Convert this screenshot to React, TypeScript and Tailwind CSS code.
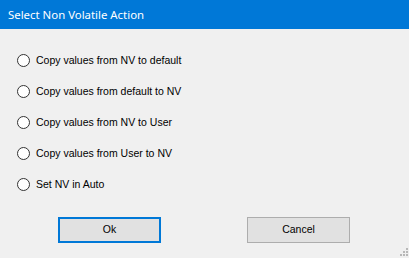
import React from "react";

const options = [
  "Copy values from NV to default",
  "Copy values from default to NV",
  "Copy values from NV to User",
  "Copy values from User to NV",
  "Set NV in Auto",
];

function Grip() {
  const dots = [
    [6, 0],
    [3, 3],
    [6, 3],
    [0, 6],
    [3, 6],
    [6, 6],
  ];
  return (
    <div className="absolute right-[1px] bottom-[2px] w-[8px] h-[8px]">
      {dots.map(([x, y], i) => (
        <span
          key={i}
          className="absolute w-[2px] h-[2px] bg-[#b8b8b8]"
          style={{ left: x, top: y }}
        />
      ))}
    </div>
  );
}

export default function App() {
  return (
    <div className="w-[409px] h-[258px] bg-[#f0f0f0] relative flex flex-col overflow-hidden">
      <div
        className="h-[29px] bg-[#0078d7] text-white text-[11.4px] flex items-center pl-[8px]"
        style={{ fontFamily: '"Noto Sans", "Segoe UI", sans-serif' }}
      >
        Select Non Volatile Action
      </div>
      <div
        className="flex flex-col gap-[18px] pl-[17px] pt-[25px]"
        style={{ fontFamily: '"Liberation Sans", Arial, sans-serif' }}
      >
        {options.map((o) => (
          <div key={o} className="flex items-center h-[13px] gap-[6px] text-[10.5px] text-black">
            <span className="w-[13px] h-[13px] rounded-full border border-[#333333] bg-white shrink-0" />
            <span className="leading-[13px]">{o}</span>
          </div>
        ))}
      </div>
      <div
        className="flex pl-[58px] gap-[86px] mt-[26px]"
        style={{ fontFamily: '"Liberation Sans", Arial, sans-serif' }}
      >
        <button className="w-[103px] h-[26px] border-2 border-[#0078d7] bg-[#e1e1e1] text-[10.5px] text-black flex items-center justify-center">
          Ok
        </button>
        <button className="w-[103px] h-[26px] border border-[#adadad] bg-[#e1e1e1] text-[10.5px] text-black flex items-center justify-center">
          Cancel
        </button>
      </div>
      <Grip />
    </div>
  );
}
